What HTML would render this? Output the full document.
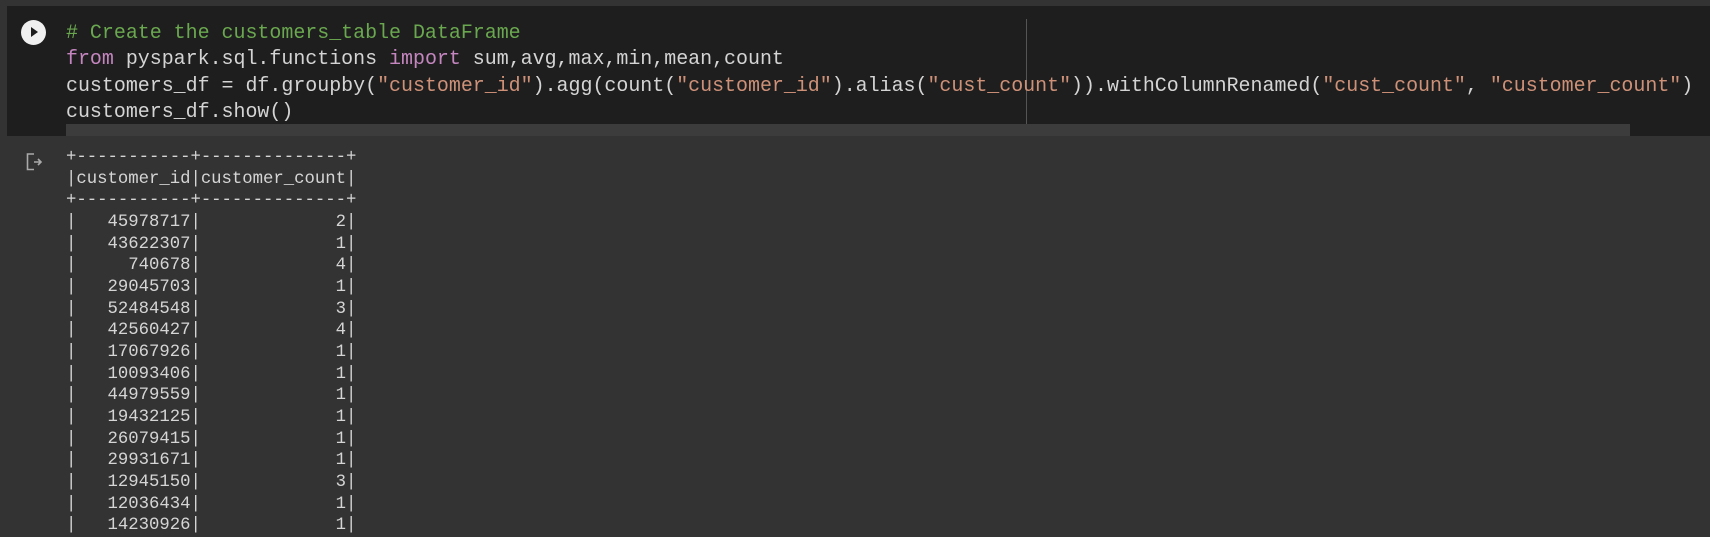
<!DOCTYPE html>
<html><head><meta charset="utf-8"><style>
html,body{margin:0;padding:0;width:1710px;height:527px;overflow:hidden;background:#333333;}
.cell{position:absolute;left:7px;top:6px;width:1703px;height:130px;background:#1e1e1e;}
.code{position:absolute;left:66px;top:20px;font-family:"Liberation Mono",monospace;font-size:19.95px;line-height:26.4px;color:#d4d4d4;white-space:pre;}
.c{color:#6aa84f}.k{color:#c586c0}.s{color:#ce9178}
.sb{position:absolute;left:66px;top:124px;width:1564px;height:12px;background:#3c3c3c;}
.vl{position:absolute;left:1026px;top:19px;width:1px;height:117px;background:#555;}
.run{position:absolute;left:21px;top:20px;width:25px;height:25px;border-radius:50%;background:#f0f0f0;}
.run:after{content:"";position:absolute;left:10px;top:7px;border-left:7px solid #1e1e1e;border-top:5.5px solid transparent;border-bottom:5.5px solid transparent;}
.out{position:absolute;left:66px;top:147px;font-family:"Liberation Mono",monospace;font-size:17.3px;line-height:21.66px;color:#d5d5d5;white-space:pre;}
</style></head><body>
<div class="cell"></div>
<div class="run"></div>
<div class="vl"></div>
<div class="sb"></div>
<div class="code"><span class="c"># Create the customers_table DataFrame</span>
<span class="k">from</span> pyspark.sql.functions <span class="k">import</span> sum,avg,max,min,mean,count
customers_df = df.groupby(<span class="s">"customer_id"</span>).agg(count(<span class="s">"customer_id"</span>).alias(<span class="s">"cust_count"</span>)).withColumnRenamed(<span class="s">"cust_count"</span>, <span class="s">"customer_count"</span>)
customers_df.show()</div>
<svg style="position:absolute;left:26px;top:153px" width="20" height="18" viewBox="0 0 20 18"><path d="M8 1H1.5V16.5H8M8 9H15M12 6L15 9L12 12" fill="none" stroke="#aaa" stroke-width="1.6"/></svg>
<div class="out">+-----------+--------------+
|customer_id|customer_count|
+-----------+--------------+
|   45978717|             2|
|   43622307|             1|
|     740678|             4|
|   29045703|             1|
|   52484548|             3|
|   42560427|             4|
|   17067926|             1|
|   10093406|             1|
|   44979559|             1|
|   19432125|             1|
|   26079415|             1|
|   29931671|             1|
|   12945150|             3|
|   12036434|             1|
|   14230926|             1|</div>
</body></html>
